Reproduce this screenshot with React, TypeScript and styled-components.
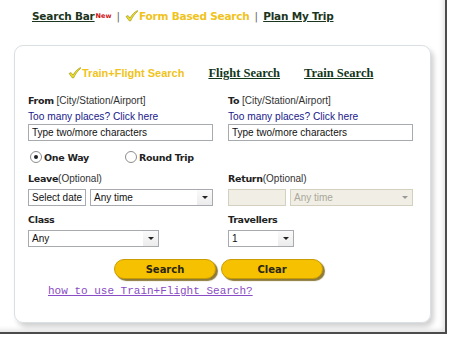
import styled, { createGlobalStyle } from "styled-components";

const Global = createGlobalStyle`
  html, body {
    margin: 0;
    background: #ffffff;
  }
  body {
    font-family: "Liberation Sans", Arial, sans-serif;
    font-size: 10px;
    color: #222;
  }
`;

const Frame = styled.div`
  width: 447px;
  height: 334px;
  border-right: 2px solid #4b4b4b;
  border-bottom: 2px solid #4b4b4b;
  box-shadow: inset -5px -5px 5px -3px rgba(0, 0, 0, 0.12);
  box-sizing: border-box;
  padding-top: 7px;
`;

const Nav = styled.nav`
  display: flex;
  align-items: center;
  height: 18px;
  padding-left: 32px;
  font-family: "DejaVu Sans", Verdana, sans-serif;
  font-weight: bold;
  font-size: 10.5px;
`;

const NavLink = styled.a<{ $active?: boolean }>`
  color: ${(p) => (p.$active ? "#f0c31c" : "#1c3520")};
  text-decoration: ${(p) => (p.$active ? "none" : "underline")};
  display: inline-flex;
  align-items: center;
  gap: 1px;
  letter-spacing: -0.2px;
`;

const NewTag = styled.span`
  color: #cc1111;
  font-size: 6.5px;
  margin-left: 1px;
  align-self: flex-start;
  margin-top: 5px;
`;

const Sep = styled.span`
  color: #666;
  font-weight: normal;
  margin: 0 5px 0 5px;
`;

const Card = styled.section`
  margin: 20px 0 0 14px;
  width: 417px;
  height: 278px;
  box-sizing: border-box;
  border: 1px solid #d9dfe2;
  border-radius: 9px;
  box-shadow: 3px 4px 5px rgba(0, 0, 0, 0.18);
  padding: 19px 0 0 13px;
`;

const Tabs = styled.div`
  display: flex;
  align-items: center;
  height: 16px;
  padding-left: 40px;
  gap: 24px;
`;

const ActiveTab = styled.span`
  display: inline-flex;
  align-items: center;
  gap: 1px;
  font-family: "Liberation Sans", Arial, sans-serif;
  font-weight: bold;
  font-size: 11px;
  color: #f0c31c;
`;

const Tab = styled.a`
  font-family: "Liberation Serif", "Times New Roman", serif;
  font-weight: bold;
  font-size: 12.5px;
  color: #13361a;
  text-decoration: underline;
`;

const Grid = styled.div`
  display: grid;
  grid-template-columns: 185px 185px;
  column-gap: 15px;
  margin-top: 13px;
`;

const Field = styled.div`
  display: flex;
  flex-direction: column;
`;

const Label = styled.div`
  height: 14px;
  line-height: 14px;
  font-size: 10px;
  color: #333;
  b {
    color: #222;
    font-family: "DejaVu Sans", Verdana, sans-serif;
    font-size: 9.5px;
    letter-spacing: -0.3px;
  }
`;

const Hint = styled.a`
  height: 15px;
  line-height: 15px;
  margin-top: 1px;
  font-size: 10.2px;
  color: #20208c;
  text-decoration: none;
`;

const TextBox = styled.div<{ $w?: number; $disabled?: boolean }>`
  box-sizing: border-box;
  width: ${(p) => (p.$w ? `${p.$w}px` : "100%")};
  height: 17px;
  line-height: 15px;
  padding-left: 3px;
  border: 1px solid ${(p) => (p.$disabled ? "#d4d0c0" : "#a7abb0")};
  background: ${(p) => (p.$disabled ? "#f1efe5" : "#fff")};
  color: #111;
  font-size: 10px;
  white-space: nowrap;
  overflow: hidden;
`;

const SelectBox = styled.div<{ $w?: number; $disabled?: boolean }>`
  box-sizing: border-box;
  display: flex;
  align-items: center;
  width: ${(p) => (p.$w ? `${p.$w}px` : "100%")};
  flex: ${(p) => (p.$w ? "none" : "1")};
  height: 17px;
  padding-left: 3px;
  border: 1px solid ${(p) => (p.$disabled ? "#d4d0c0" : "#a7abb0")};
  background: ${(p) => (p.$disabled ? "#f1efe5" : "#fff")};
  color: ${(p) => (p.$disabled ? "#a9a79c" : "#111")};
  font-size: 10px;
  span {
    flex: 1;
  }
`;

const Arrow = styled.i<{ $disabled?: boolean }>`
  width: 15px;
  height: 15px;
  display: flex;
  align-items: center;
  justify-content: center;
  background: ${(p) =>
    p.$disabled ? "#f1efe5" : "linear-gradient(#fafafa, #ececec)"};
  &::after {
    content: "";
    border-left: 3px solid transparent;
    border-right: 3px solid transparent;
    border-top: 3px solid ${(p) => (p.$disabled ? "#999" : "#222")};
  }
`;

const Row = styled.div`
  display: flex;
  gap: 4px;
  margin-top: 3px;
`;

const RadioRow = styled.div`
  grid-column: 1 / span 2;
  display: flex;
  align-items: center;
  height: 16px;
  margin: 8px 0 7px 2px;
`;

const RadioItem = styled.label`
  display: inline-flex;
  align-items: center;
  gap: 2px;
  font-family: "DejaVu Sans", Verdana, sans-serif;
  font-weight: bold;
  font-size: 9.5px;
  letter-spacing: -0.3px;
  color: #222;
  width: 95px;
`;

const Radio = styled.span<{ $on?: boolean }>`
  width: 10px;
  height: 10px;
  border-radius: 50%;
  border: 1px solid #8c8c8c;
  background: #fff;
  display: inline-flex;
  align-items: center;
  justify-content: center;
  &::after {
    content: "";
    width: 4px;
    height: 4px;
    border-radius: 50%;
    background: ${(p) => (p.$on ? "#222" : "transparent")};
  }
`;

const Spacer = styled.div`
  height: 7px;
  grid-column: 1 / span 2;
`;

const Buttons = styled.div`
  display: flex;
  gap: 5px;
  margin: 12px 0 0 86px;
`;

const Pill = styled.button`
  width: 102px;
  height: 20px;
  border: 1px solid #c99c00;
  border-radius: 10px;
  background: #f6c100;
  box-shadow: 2px 2px 1px #8c7a3a;
  font-family: "DejaVu Sans", Verdana, sans-serif;
  font-weight: bold;
  font-size: 10px;
  color: #2a2614;
  padding: 0;
`;

const Help = styled.a`
  display: inline-block;
  margin: 6px 0 0 20px;
  font-family: "Liberation Mono", "Courier New", monospace;
  font-size: 11px;
  color: #8a4cc4;
  text-decoration: underline;
`;

function Check() {
  return (
    <svg width="13" height="12" viewBox="0 0 13 12">
      <path
        d="M1 6.5 L3 5.5 L5 8 C7 4.5 9.5 2 12.5 0.5 L12.8 1.3 C10 3.5 7.5 7 5.6 11 L4.4 11 Z"
        fill="#e9dc22"
        stroke="#8a7d10"
        strokeWidth="0.5"
      />
    </svg>
  );
}

function Select({ value, w, disabled }: { value: string; w?: number; disabled?: boolean }) {
  return (
    <SelectBox $w={w} $disabled={disabled}>
      <span>{value}</span>
      <Arrow $disabled={disabled} />
    </SelectBox>
  );
}

export default function App() {
  return (
    <>
      <Global />
      <Frame>
        <Nav>
          <NavLink href="#">Search Bar</NavLink>
          <NewTag>New</NewTag>
          <Sep>|</Sep>
          <NavLink $active>
            <Check />
            Form Based Search
          </NavLink>
          <Sep>|</Sep>
          <NavLink href="#">Plan My Trip</NavLink>
        </Nav>
        <Card>
          <Tabs>
            <ActiveTab>
              <Check />
              Train+Flight Search
            </ActiveTab>
            <Tab href="#">Flight Search</Tab>
            <Tab href="#">Train Search</Tab>
          </Tabs>
          <Grid>
            <Field>
              <Label>
                <b>From</b> [City/Station/Airport]
              </Label>
              <Hint href="#">Too many places? Click here</Hint>
              <TextBox>Type two/more characters</TextBox>
            </Field>
            <Field>
              <Label>
                <b>To</b> [City/Station/Airport]
              </Label>
              <Hint href="#">Too many places? Click here</Hint>
              <TextBox>Type two/more characters</TextBox>
            </Field>
            <RadioRow>
              <RadioItem>
                <Radio $on />
                One Way
              </RadioItem>
              <RadioItem>
                <Radio />
                Round Trip
              </RadioItem>
            </RadioRow>
            <Field>
              <Label>
                <b>Leave</b>(Optional)
              </Label>
              <Row>
                <TextBox $w={58}>Select date</TextBox>
                <Select value="Any time" />
              </Row>
            </Field>
            <Field>
              <Label>
                <b>Return</b>(Optional)
              </Label>
              <Row>
                <TextBox $w={58} $disabled />
                <Select value="Any time" disabled />
              </Row>
            </Field>
            <Spacer />
            <Field>
              <Label>
                <b>Class</b>
              </Label>
              <Row>
                <Select value="Any" w={131} />
              </Row>
            </Field>
            <Field>
              <Label>
                <b>Travellers</b>
              </Label>
              <Row>
                <Select value="1" w={66} />
              </Row>
            </Field>
          </Grid>
          <Buttons>
            <Pill>Search</Pill>
            <Pill>Clear</Pill>
          </Buttons>
          <Help href="#">how to use Train+Flight Search?</Help>
        </Card>
      </Frame>
    </>
  );
}
